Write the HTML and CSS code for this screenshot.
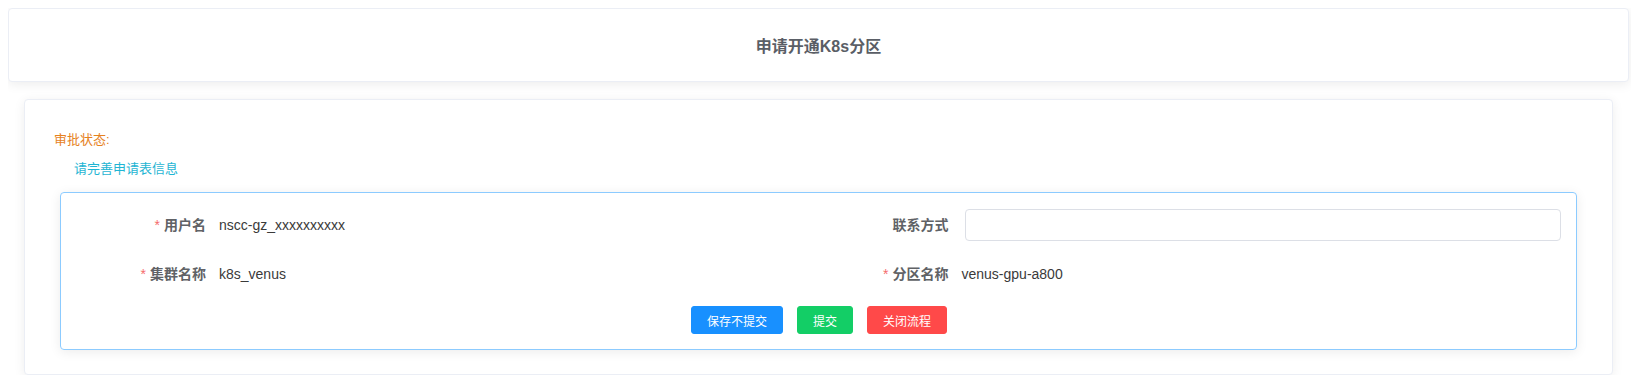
FILE: index.html
```html
<!DOCTYPE html>
<html lang="zh-CN">
<head>
<meta charset="utf-8">
<title>申请开通K8s分区</title>
<link rel="stylesheet" href="styles.css">
</head>
<body>
  <div class="header">申请开通K8s分区</div>
  <div class="card">
    <div class="status-label">审批状态:</div>
    <div class="status-text">请完善申请表信息</div>
    <div class="form-box">
      <div class="form-row">
        <div class="form-item">
          <label class="label"><span class="req">*</span>用户名</label>
          <div class="value">nscc-gz_xxxxxxxxxx</div>
        </div>
        <div class="form-item">
          <label class="label">联系方式</label>
          <div class="value"><input class="input" type="text"></div>
        </div>
      </div>
      <div class="form-row row-2">
        <div class="form-item">
          <label class="label"><span class="req">*</span>集群名称</label>
          <div class="value">k8s_venus</div>
        </div>
        <div class="form-item">
          <label class="label"><span class="req">*</span>分区名称</label>
          <div class="value">venus-gpu-a800</div>
        </div>
      </div>
      <div class="actions">
        <button class="btn btn-blue">保存不提交</button>
        <button class="btn btn-green">提交</button>
        <button class="btn btn-red">关闭流程</button>
      </div>
    </div>
  </div>
</body>
</html>
```

FILE: styles.css
```css
* { box-sizing: border-box; }
body {
  margin: 8px;
  background: #ffffff;
  font-family: "Liberation Sans", "Noto Sans CJK SC", sans-serif;
  color: #606266;
}
.header {
  height: 74px;
  margin-right: 2px;
  border: 1px solid #ebeef5;
  border-radius: 4px;
  background: #fff;
  box-shadow: 0 2px 12px 0 rgba(0, 0, 0, 0.08);
  display: flex;
  align-items: center;
  justify-content: center;
  font-size: 16px;
  font-weight: bold;
  color: #5a5e66;
}
.card {
  margin: 17px 18px 0 16px;
  border: 1px solid #ebeef5;
  border-radius: 4px;
  background: #fff;
  box-shadow: 0 2px 12px 0 rgba(0, 0, 0, 0.07);
  padding: 30px 35px 24px 35px;
}
.status-label {
  margin-left: -6px;
  font-size: 13px;
  line-height: 20px;
  color: #e6821e;
}
.status-text {
  margin-top: 9px;
  margin-left: 14px;
  font-size: 13px;
  line-height: 20px;
  color: #1fb5d3;
}
.form-box {
  margin-top: 13px;
  border: 1px solid #8ccbff;
  border-radius: 4px;
  box-shadow: 0 2px 12px 0 rgba(0, 0, 0, 0.08);
  padding: 16px 15px 15px 15px;
}
.form-row {
  display: grid;
  grid-template-columns: 1fr 1fr;
}
.row-2 { margin-top: 17px; }
.form-item {
  display: flex;
  align-items: center;
  height: 32px;
}
.label {
  width: 142px;
  flex: none;
  text-align: right;
  padding-right: 12px;
  font-size: 14px;
  font-weight: bold;
  line-height: 32px;
  color: #606266;
}
.req {
  color: #f56c6c;
  font-weight: normal;
  margin-right: 4px;
}
.value {
  flex: 1;
  display: flex;
  align-items: center;
  font-size: 14px;
  line-height: 32px;
  color: #3a3a3a;
  padding-left: 1px;
}
.input {
  flex: 1;
  height: 32px;
  margin-left: 3px;
  margin-right: 0;
  border: 1px solid #dcdfe6;
  border-radius: 4px;
  background: #fff;
  outline: none;
  padding: 0 15px;
  font-family: inherit;
  font-size: 14px;
}
.actions {
  margin-top: 16px;
  display: flex;
  justify-content: center;
  gap: 14px;
  padding-left: 1px;
}
.btn {
  height: 28px;
  padding: 0 15px;
  border: 1px solid transparent;
  border-radius: 3px;
  font-family: inherit;
  font-size: 12px;
  color: #fff;
  cursor: pointer;
}
.btn-blue { background: #1890ff; border-color: #1890ff; }
.btn-green { background: #13ce66; border-color: #13ce66; }
.btn-red { background: #ff4949; border-color: #ff4949; }
```
